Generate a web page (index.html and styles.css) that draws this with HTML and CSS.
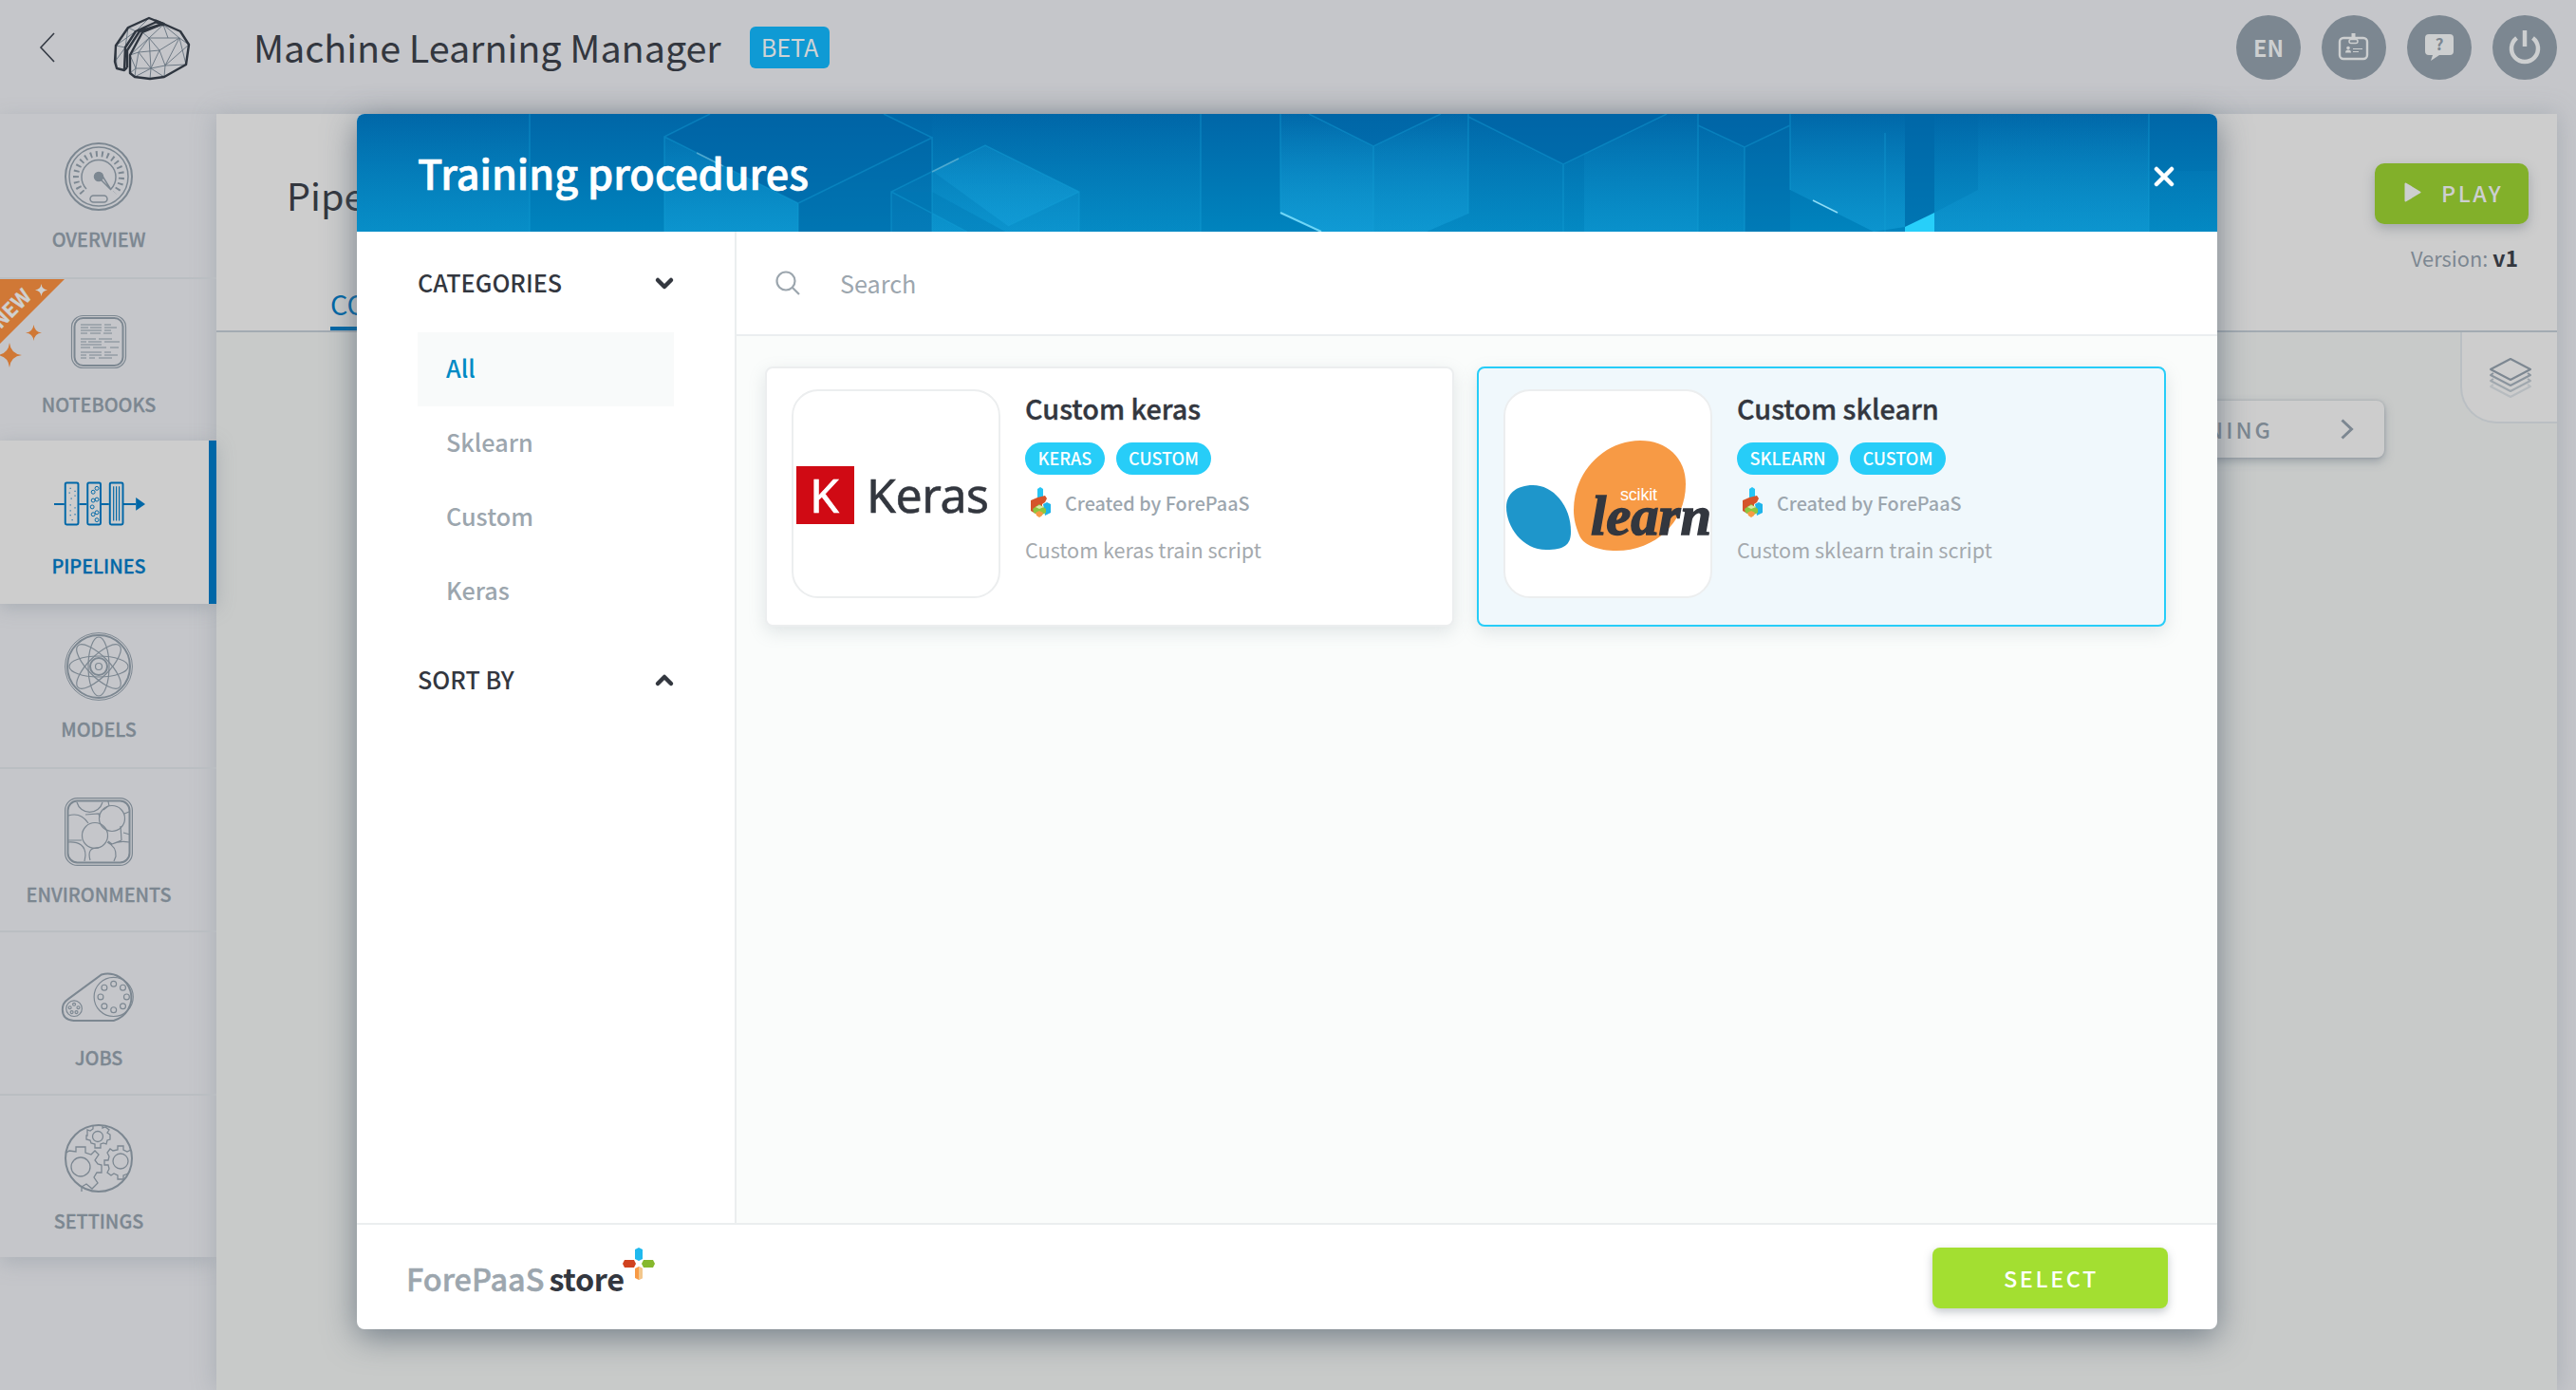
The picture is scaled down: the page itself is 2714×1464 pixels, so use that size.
FILE: index.html
```html
<!DOCTYPE html>
<html lang="en">
<head>
<meta charset="utf-8">
<title>Machine Learning Manager</title>
<link rel="stylesheet" href="styles.css">
</head>
<body>
<svg width="0" height="0" class="defs">
  <defs>
    <symbol id="brand" viewBox="0 0 22 32">
      <path d="M8 2l3-2 3 2v11l-3 2-3-2z" fill="#25c5f5"/>
      <path d="M1 14l7-3 8-2 2 3-2 4-3 2v5l-7 5-5-3z" fill="#d5542b"/>
      <path d="M14 18l4-2 4 2v9l-6 3z" fill="#1fb4ea"/>
      <path d="M3 23l7-5 7 5v4l-6 3-7-3z" fill="#8cc63f"/>
      <path d="M6 27l4-2 4 2-1 3-3 2-3-2z" fill="#f79a45"/>
      <path d="M6 21l4-2 5 2-5 2z" fill="#d9e8a8"/>
    </symbol>
    <symbol id="spark" viewBox="0 0 20 20"><path d="M10 0Q11 9 20 10Q11 11 10 20Q9 11 0 10Q9 9 10 0z" fill="currentColor"/></symbol>
  </defs>
</svg>

<header class="topbar">
  <svg class="back" viewBox="0 0 18 32" fill="none" stroke="#343a44" stroke-width="1.6"><path d="M16 1L2 16l14 15"/></svg>
  <svg class="logo" viewBox="0 0 82 68" fill="none" stroke="#2f3640" stroke-width="2.4" stroke-linejoin="round">
    <g stroke-width=".9" stroke="#64727e"><path d="M38 23h32M38 23l-7-6M38 23L53 9l17 14 10 7M38 23l11 13 21-13M38 23l-11 15-9 3M38 23L18 41M27 38l22-2M49 36l6 16 25-22M49 36l-9 19H24M27 38l13 17-1 11M27 38l-3 17-6 5M24 55l-6-14M40 55l14 9M40 55l15-3 22-1M55 52l-1 12M70 23L55 52M70 23l7 28M24 55l-1 9 17-9M38 23l2 32M38 2L24 16M16 12l8 4L3 31M13 33L3 31l1 24M13 33L2 48M16 12l-3 21M53 9l5 14"/></g>
    <path d="M53 8l18 8 9 14-3 21-23 13-15 2-16-2-5-4V41l13-24z"/><path d="M53 8L38 2 16 12 3 31 2 48l2 7 8 2 3-3"/><path d="M12 56l1-23 11-17L46 6M15 54V36l13-20 25-8"/><path d="M44 5l10 4" stroke-width="4"/>
  </svg>
  <h1 class="app-title">Machine Learning Manager</h1>
  <span class="beta">BETA</span>
  <nav class="actions">
    <span class="round">EN</span>
    <span class="round"><svg width="34" height="30" viewBox="0 0 34 30" fill="none" stroke="#cdcfd0"><rect x="2" y="5" width="29" height="22" rx="4" stroke-width="2.4"/><path d="M16.500 0v7" stroke-width="4"/><rect x="12" y="6.500" width="9" height="4" rx="2" fill="#7c8791" stroke-width="1.500"/><circle cx="11" cy="15.500" r="1.800" fill="#cdcfd0" stroke="none"/><path d="M8 20.500q0-3 3-3t3 3z" fill="#cdcfd0" stroke="none"/><path d="M16 16.500h10M16 19.500h6" stroke-width="1.200"/></svg></span>
    <span class="round"><svg width="30" height="28" viewBox="0 0 30 28"><path d="M4 0h22q4 0 4 4v14q0 4-4 4H15l-9 6 2-6H4q-4 0-4-4V4q0-4 4-4z" fill="#cdcfd0"/><text x="15" y="17" text-anchor="middle" font-size="17" font-weight="700" fill="#7c8791">?</text></svg></span>
    <span class="round"><svg width="34" height="36" viewBox="0 0 34 36" fill="none" stroke="#cdcfd0" stroke-width="4.500"><path d="M8.500 8a14 14 0 1 0 17 0"/><path d="M17 0v17"/></svg></span>
  </nav>
</header>

<div class="body">
  <aside class="sidebar">
    <div class="item">
      <svg viewBox="0 0 72 72" fill="none" stroke="#7c8791" stroke-width="1.500"><circle cx="36" cy="36" r="35" stroke-width="2"/><circle cx="36" cy="36" r="31"/><path d="M19 53a24 24 0 1 1 34 0" stroke-width="6" stroke-dasharray="1.900 4"/><path d="M23 49a18 18 0 1 1 26 0"/><circle cx="36" cy="36" r="4.500" fill="#7c8791"/><path d="M38 39l11 11-8-13z"/><rect x="27" y="56" width="18" height="7" rx="3.500"/></svg>
      <span>OVERVIEW</span>
    </div>
    <div class="item line">
      <svg viewBox="0 0 72 72" fill="none" stroke="#7c8791" stroke-width="1.200"><rect x="7.500" y="8.500" width="57" height="55" rx="12"/><rect x="10.500" y="11" width="51" height="50" rx="9" stroke-width="2"/><g stroke-width="1.100"><path d="M17 18h22M42 18h7M17 24h22M42 24h7M17 27h7M27 27h11M41 27h9M17 21h8M27 21h12M42 21h13M17 33h16M36 33h14M17 36h6M25 36h14M42 36h16M17 39h22M17 42h10M30 42h14M48 42h9M17 47h22M42 47h7M17 50h6M26 50h13M42 50h14M17 53h6M26 53h6M36 53h14"/></g></svg>
      <span>NOTEBOOKS</span>
      <div class="ribbon"><b>NEW</b></div>
      <svg class="sp s1"><use href="#spark"/></svg><svg class="sp s2"><use href="#spark"/></svg><svg class="sp s3"><use href="#spark"/></svg>
    </div>
    <div class="item active">
      <svg class="wide" viewBox="0 0 98 72" fill="none" stroke="#0067a7" stroke-width="2"><path d="M0 37h11M27 37h8M51 37h8M74 37h14"/><path d="M88 30l10 7-10 7z" fill="#0067a7" stroke="none"/><rect x="12" y="14" width="14" height="45" rx="1.500"/><rect x="36" y="14" width="14" height="45" rx="1.500"/><rect x="60" y="14" width="14" height="45" rx="1.500"/><path d="M64 18v37M67 18v37M70 18v37" stroke-width="1.200"/><g stroke-width="1"><circle cx="42" cy="24" r="2"/><circle cx="46" cy="20" r="2"/><circle cx="42" cy="33" r="2"/><circle cx="46" cy="32" r="2"/><circle cx="41" cy="40" r="2"/><circle cx="42" cy="48" r="2"/><circle cx="46" cy="46" r="2"/><circle cx="46" cy="54" r="2"/></g><path d="M17 20h1M22 23h1M16 25h1M18 31h1M22 28h1M17 38h1M22 41h1M17 44h1M17 49h1M22 48h1M19 54h1" stroke-width="1.300"/></svg>
      <span>PIPELINES</span>
    </div>
    <div class="item">
      <svg viewBox="0 0 72 72" fill="none" stroke="#7c8791" stroke-width="1.200"><circle cx="36" cy="36" r="35.400" stroke-width="1"/><circle cx="36" cy="36" r="33" stroke-width="2"/><ellipse cx="36" cy="36" rx="11" ry="31"/><ellipse cx="36" cy="36" rx="31" ry="11"/><ellipse cx="36" cy="36" rx="11" ry="31" transform="rotate(45 36 36)"/><ellipse cx="36" cy="36" rx="11" ry="31" transform="rotate(-45 36 36)"/><circle cx="36" cy="36" r="9" stroke-width="2"/><circle cx="36" cy="36" r="3.500"/></svg>
      <span>MODELS</span>
    </div>
    <div class="item line">
      <svg viewBox="0 0 72 72" fill="none" stroke="#7c8791" stroke-width="1.200"><rect x=".6" y=".6" width="70.800" height="70.800" rx="13"/><rect x="3.500" y="3.500" width="65" height="65" rx="10" stroke-width="2"/><circle cx="50" cy="22" r="13.500"/><circle cx="32" cy="40" r="13.500"/><path d="M13 5a14 14 0 0 0 27 0M4 19q13-4 21 8M4 45h14M4 47q18-1 18 14l-1 6M27 66q-4-14 9-13M45 47q10 5 9 15l-2 5M46 46l4 3q8-4 18-2M59 30l1 15M60 45l-10 4M62 37l7 2M46 4l1 5M63 17l5-2M41 13l5-4M22 18l14-1 1 4"/></svg>
      <span>ENVIRONMENTS</span>
    </div>
    <div class="item line">
      <svg class="wide" viewBox="-13 0 98 72" fill="none" stroke="#7c8791" stroke-width="1.200"><path d="M38 14a25 25 0 1 1 13 49.500H8q-12-1-12-12 0-7 6-11z" stroke-width="2"/><circle cx="51" cy="38" r="21"/><circle cx="8.500" cy="50.500" r="8.500"/><g><circle cx="51" cy="24" r="3"/><circle cx="61" cy="28" r="3"/><circle cx="65" cy="38" r="3"/><circle cx="61" cy="48" r="3"/><circle cx="51" cy="52" r="3"/><circle cx="41" cy="48" r="3"/><circle cx="37" cy="38" r="3"/><circle cx="41" cy="28" r="3"/><circle cx="8.500" cy="46" r="1.500"/><circle cx="13" cy="49.500" r="1.500"/><circle cx="11" cy="54.500" r="1.500"/><circle cx="6" cy="54.500" r="1.500"/><circle cx="4" cy="49.500" r="1.500"/></g></svg>
      <span>JOBS</span>
    </div>
    <div class="item line">
      <svg viewBox="0 0 72 72" fill="none" stroke="#7c8791" stroke-width="1.300"><circle cx="36" cy="36" r="35" stroke-width="2"/><circle cx="35" cy="13" r="5.500"/><path d="M30 2v3l-3 2-3-1v6h-1v4l4 1 1 3 4 1v4h6v-4l3-1 3 1 1-4 3-1v-5l-3-2 2-3-4-3-3 1V2"/><circle cx="17" cy="45" r="10"/><path d="M2 30l3-2 7 1v-5h10v6l6 2 4-4 4 4-4 6 3 4 4 1v8h-5l-3 5 4 6-6 6-6-5-5 3v5"/><circle cx="59" cy="39" r="8"/><path d="M70 27l-4 2-4-2v-4h-6v4l-5 1-3-2-3 4 2 4-1 4h-4v5h4l1 4-2 4 4 3 3-2 4 2v4h6v-4l5-2"/></svg>
      <span>SETTINGS</span>
    </div>
  </aside>
  <main class="pane">
    <section class="pane-head">
      <div class="pane-left">
        <h2>Pipe</h2>
        <div class="tabs"><span class="tab">CO</span></div>
      </div>
      <div class="pane-right">
        <button class="play"><svg width="18" height="21" viewBox="0 0 18 21"><path d="M1.500 1.500v18l15-9z" fill="#cdcfd0" stroke="#cdcfd0" stroke-width="2" stroke-linejoin="round"/></svg>PLAY</button>
        <p class="version">Version: <b>v1</b></p>
      </div>
    </section>
    <section class="canvas">
      <div class="node"><span>NING</span><svg width="14" height="22" viewBox="0 0 14 22" fill="none" stroke="#7c8791" stroke-width="3"><path d="M1.500 1.500L11.500 11l-10 9.500"/></svg></div>
      <div class="layers"><svg width="46" height="44" viewBox="0 0 46 44" fill="none" stroke-width="2" stroke-linejoin="round"><path d="M23 2L44 13 23 24 2 13z" stroke="#7c8791"/><path d="M5 17l-3 2 21 11 21-11-3-2" stroke="#8a949d"/><path d="M5 23l-3 2 21 11 21-11-3-2" stroke="#a0a8ae"/><path d="M5 29l-3 2 21 11 21-11-3-2" stroke="#b6bbbf"/></svg></div>
    </section>
  </main>
</div>

<div class="modal">
  <header class="modal-head">
    <svg class="pattern" viewBox="0 0 1960 124" preserveAspectRatio="none">
      <defs>
        <linearGradient id="g" x2="0" y2="1"><stop offset="0" stop-color="#0066a7"/><stop offset="1" stop-color="#0084be"/></linearGradient>
        <linearGradient id="l" gradientUnits="userSpaceOnUse" x1="0" y1="0" x2="0" y2="124"><stop offset="0" stop-color="#18a5de" stop-opacity=".02"/><stop offset="1" stop-color="#18a5de" stop-opacity=".5"/></linearGradient>
      </defs>
      <path d="M0 0h1960v124H0z" fill="url(#g)"/>
      <g fill="url(#l)">
        <path d="M0 0h182v124H0z" opacity=".6"/><path d="M324 24l141 70v30H324z"/><path d="M606 0h283v124H606z" opacity=".4"/>
        <path d="M563 82l99-49 99 49v42H563z" opacity=".7"/><path d="M606 60l56-27 99 49-75 36z" opacity=".9"/>
        <path d="M973 0h30l68 34v90h-55l-43-20z"/><path d="M1071 34l71-34h29v105l-44 19h-56z" opacity=".7"/>
        <path d="M973 0h198v105l-44 19h-111l-43-20z" opacity=".7"/>
        <path d="M1171 3l100 50v71H1127l44-19z" opacity=".4"/><path d="M1293 42l87-42h33v124H1293z" opacity=".8"/><path d="M1271 53l22-11v82h-22z" opacity=".3"/><path d="M1413 12l49 23v89h-49z" opacity=".4"/>
        <path d="M1510 0h121v119l-33 5-88-44z"/><path d="M1662 0h226v124H1662z" opacity=".6"/><path d="M1708 0h180v124h-226V104l46-24z" opacity=".6"/><path d="M1888 60h72v64h-72z" opacity=".3"/>
      </g>
      <path d="M372 0l-48 24 141 70 141-69-51-25z" fill="#0062a3" opacity=".5"/><path d="M465 94l141-69v99H465z" fill="#0063a4" opacity=".45"/>
      <path d="M606 82l-43 0 80 42h40z" fill="#0078b5" opacity=".4"/>
      <path d="M1003 0h139l-71 34zM1171 0h209l-109 53-100-50zM1413 0h97v12l-48 23-49-23z" fill="#0064a5" opacity=".5"/>
      <path d="M1462 35l48-23v112h-48z" fill="#0067a7" opacity=".3"/><path d="M1631 0h31v104l-31 15z" fill="#0067a7" opacity=".5"/>
      <path d="M1631 119l31-15v20h-31z" fill="#27cffa"/>
      <g fill="none" stroke="#14a0d6" stroke-width="1.500" opacity=".42"><path d="M182 0v124M372 0l-48 24v100M324 24l141 70v30M465 94l141-69v99M606 25L555 0M889 0v124M563 124V82l99-49 99 49v42M563 82l80 42M761 82l-75 36M973 0v104M1003 0l68 34 71-34M1071 34v90M1171 0v105M1171 3l100 50 109-53M1271 53v71M1413 0v124M1413 12l49 23 48-23M1462 35v89M1510 0v80M1610 20v104M1888 0v124"/></g>
      <path d="M973 104l43 20" stroke="#6fd6f7" stroke-width="2"/><path d="M1534 91l26 13" stroke="#8fdcf5" stroke-width="1.500"/><path d="M358 41l28 14M606 61l28-14" stroke="#4fa8cf" stroke-width="1.500"/>
    </svg>
    <h2>Training procedures</h2>
    <svg class="close" width="22" height="22" viewBox="0 0 22 22" stroke="#fff" stroke-width="4.500" stroke-linecap="round"><path d="M3 3l16 16M19 3L3 19"/></svg>
  </header>
  <div class="modal-body">
    <aside class="filters">
      <h3>CATEGORIES<svg width="20" height="13" viewBox="0 0 20 13"><path d="M3 3l7 7 7-7"/></svg></h3>
      <ul><li class="on">All</li><li>Sklearn</li><li>Custom</li><li>Keras</li></ul>
      <h3>SORT BY<svg width="20" height="13" viewBox="0 0 20 13"><path d="M3 10l7-7 7 7"/></svg></h3>
    </aside>
    <section class="results">
      <div class="search"><svg width="26" height="26" viewBox="0 0 26 26" fill="none" stroke="#9ca6ae" stroke-width="2.200"><circle cx="11" cy="11" r="9.500"/><path d="M18 18l7 7"/></svg><span>Search</span></div>
      <div class="cards">
        <article class="card">
          <div class="thumb"><svg viewBox="0 0 216 216"><path d="M3 79h61v61H3z" fill="#d00a14"/><text class="noto" x="17" y="128" font-size="50" fill="#fff">K</text><text class="noto" x="77" y="128" font-size="50" fill="#33373f" textLength="129">Keras</text></svg></div>
          <div class="info">
            <h4>Custom keras</h4>
            <div class="tags"><span>KERAS</span><span>CUSTOM</span></div>
            <p class="by"><svg width="22" height="32"><use href="#brand"/></svg>Created by ForePaaS</p>
            <p class="desc">Custom keras train script</p>
          </div>
        </article>
        <article class="card selected">
          <div class="thumb"><svg viewBox="0 0 216 216"><path d="M29 99C50 99 69 120 69 148C69 162 62 167 43 167C18 167 1 143 1 122C1 108 12 99 29 99z" fill="#1e96cb"/><path d="M142 52C170 52 190 70 190 98C190 138 158 168 117 168C98 168 82 162 78 152C74 142 72 135 72 125C72 85 104 52 142 52z" fill="#f79a45"/><text class="arial" x="121" y="115" font-size="18" fill="#fff" textLength="39">scikit</text><text class="script" x="90" y="151" font-size="60" fill="#33373f" textLength="127" lengthAdjust="spacingAndGlyphs">learn</text></svg></div>
          <div class="info">
            <h4>Custom sklearn</h4>
            <div class="tags"><span>SKLEARN</span><span>CUSTOM</span></div>
            <p class="by"><svg width="22" height="32"><use href="#brand"/></svg>Created by ForePaaS</p>
            <p class="desc">Custom sklearn train script</p>
          </div>
        </article>
      </div>
    </section>
  </div>
  <footer class="modal-foot">
    <div class="store"><span>ForePaaS</span><b>store</b>
      <svg width="34" height="34" viewBox="0 0 34 34"><path d="M13 2l4-2 4 2v10l-4 2-4-2z" fill="#1fb9ee"/><path d="M2 13h10l2 4-2 4H2l-2-4z" fill="#d0421f"/><path d="M22 13h10l2 4-2 4H22l-2-4z" fill="#86b82c"/><path d="M13 22l4-2 4 2v10l-4 2-4-2z" fill="#f79a45"/><path d="M17 20l4 2v10l-4 2z" fill="#f3c78c"/></svg>
    </div>
    <button class="select">SELECT</button>
  </footer>
</div>
</body>
</html>
```
FILE: styles.css
```css
* { box-sizing: border-box; margin: 0; padding: 0; }
body {
  width: 2714px; height: 1464px; overflow: hidden; position: relative;
  background: #c5c6ca; color: #33373f;
  font-family: "Noto Sans CJK SC", "Noto Sans", sans-serif;
}
.defs { position: absolute; }
svg { flex: none; overflow: visible; }
button { border: 0; font-family: inherit; }
h1, h2, h3, h4 { font-weight: 400; }

.topbar { height: 120px; display: flex; align-items: flex-start; padding: 16px 20px 0 41px; }
.back { width: 18px; height: 32px; margin-top: 18px; }
.logo { width: 82px; height: 68px; margin: 1px 0 0 60px; }
.app-title { font-size: 39.6px; line-height: 66px; letter-spacing: -.08px; margin-left: 66px; width: 523px; white-space: nowrap; }
.beta { width: 84px; height: 44px; margin-top: 12px; border-radius: 6px; background: #0f9ad4; color: #cfd3d5; font-size: 25.2px; line-height: 42px; text-align: center; }
.actions { display: flex; gap: 22px; margin-left: auto; }
.round { width: 68px; height: 68px; border-radius: 50%; background: #7c8791; color: #cdcfd0; display: flex; align-items: center; justify-content: center; font-size: 23.4px; font-weight: 700; line-height: 30px; padding-bottom: 1px; }

.body { display: flex; height: 1344px; }
.sidebar { width: 228px; height: 1204px; box-shadow: 0 6px 20px rgba(125, 138, 148, .35); }
.item { position: relative; height: 172px; padding: 30px 20px 0 0; display: flex; flex-direction: column; align-items: center; gap: 18px; color: #7c8791; font-size: 19.8px; font-weight: 500; line-height: 24px; -webkit-text-stroke: .3px currentColor; }
.item svg { width: 72px; height: 72px; }
.item svg.wide { width: 96px; margin-left: 2px; }
.item.line { padding-top: 32px; box-shadow: inset 0 2px #babec2; }
.item.active { background: #cdcdcd; color: #0067a7; box-shadow: inset -8px 0 #0067a7, 0 4px 18px rgba(125, 138, 148, .4); z-index: 1; }
.ribbon { position: absolute; left: 0; top: 2px; width: 68px; height: 68px; overflow: hidden; background: #d07836; clip-path: polygon(0 0, 100% 0, 0 100%); }
.ribbon b { position: absolute; left: -19px; top: 18px; width: 60px; color: #cfd0d0; font-size: 21px; text-align: center; transform: rotate(-45deg); }
.item .sp { position: absolute; color: #d07836; }
.item .s1 { left: 37px; top: 7px; width: 13px; height: 13px; color: #cfd0d0; }
.item .s2 { left: 27px; top: 50px; width: 17px; height: 17px; }
.item .s3 { left: -3px; top: 69px; width: 26px; height: 26px; }

.pane { width: 2466px; background: #c8cac9; box-shadow: 0 0 24px rgba(125, 138, 148, .4); }
.pane-head { height: 230px; background: #cdcdcd; border-bottom: 2px solid #a3abb2; display: flex; justify-content: space-between; }
.pane-left { padding: 55px 0 0 74px; display: flex; flex-direction: column; justify-content: space-between; }
.pane-left h2 { font-size: 39.6px; line-height: 60px; }
.tab { display: block; margin-left: 46px; font-size: 28.8px; line-height: 48px; color: #0067a7; border-bottom: 4px solid #0067a7; }
.pane-right { padding: 52px 30px 0 0; display: flex; flex-direction: column; align-items: flex-end; }
.play { width: 162px; height: 64px; border-radius: 10px; background: #82b02a; color: #cdcfd0; display: flex; align-items: center; gap: 21px; padding: 0 0 3px 31px; font-size: 23.4px; font-weight: 500; letter-spacing: 2.5px; box-shadow: 0 5px 12px rgba(90, 100, 112, .35); }
.version { margin-top: 18px; padding-right: 11px; font-size: 21.8px; line-height: 34px; color: #7c8791; }
.version b { color: #33373f; font-size: 23px; font-weight: 700; }
.canvas { display: flex; justify-content: flex-end; align-items: flex-start; gap: 80px; }
.node { width: 300px; height: 60px; margin-top: 72px; border-radius: 8px; background: #cdcdcd; display: flex; align-items: center; justify-content: flex-end; gap: 71px; padding-right: 32px; color: #7c8791; font-size: 23.4px; font-weight: 500; letter-spacing: 3px; box-shadow: 0 4px 10px rgba(110, 122, 134, .5), 0 0 3px rgba(110, 122, 134, .4); }
.layers { width: 102px; height: 96px; border: 2px solid #babfc3; border-width: 0 0 2px 2px; border-bottom-left-radius: 38px; background: #cdcdcd; padding: 26px 0 0 28px; }

.modal { position: absolute; left: 376px; top: 120px; width: 1960px; height: 1280px; border-radius: 8px; overflow: hidden; background: #fff; display: flex; flex-direction: column; box-shadow: 0 8px 34px rgba(70, 86, 102, .65); }
.modal-head { position: relative; height: 124px; padding: 0 45px 0 64px; display: flex; align-items: center; justify-content: space-between; color: #fff; }
.pattern { position: absolute; inset: 0; width: 1960px; height: 124px; overflow: hidden; }
.modal-head h2 { position: relative; font-size: 43.2px; line-height: 60px; font-weight: 500; padding-bottom: 2px; -webkit-text-stroke: .7px #fff; }
.close { position: relative; top: 4px; }
.modal-body { height: 1044px; display: flex; }
.filters { width: 400px; padding: 0 64px; border-right: 2px solid #ebeeef; }
.filters h3 { height: 106px; display: flex; align-items: center; justify-content: space-between; font-size: 25.2px; font-weight: 500; }
.filters h3 svg { fill: none; stroke: #33373f; stroke-width: 4.5; stroke-linecap: round; stroke-linejoin: round; position: relative; top: 1px; }
.filters ul { list-style: none; }
.filters li { height: 78px; line-height: 75px; padding-left: 30px; font-size: 25.2px; font-weight: 500; color: #9ca6ae; }
.filters li.on { background: #f8fafa; color: #008ac4; }
.results { width: 1560px; background: #fafcfb; }
.search { height: 110px; border-bottom: 2px solid #ebeef0; background: #fff; display: flex; align-items: center; gap: 42px; padding: 0 0 1px 41px; font-size: 25.2px; color: #9ca6ae; }
.cards { display: flex; gap: 24px; padding: 32px 30px; }
.card { width: 726px; height: 274px; border: 2px solid #eceeef; border-radius: 8px; background: #fff; padding: 22px 26px; display: flex; gap: 26px; box-shadow: 0 6px 18px rgba(125, 138, 148, .2); }
.card.selected { border-color: #27cdf8; background: #f0f8fc; }
.thumb { width: 220px; height: 220px; border: 2px solid #eceeef; border-radius: 28px; background: #fff; overflow: hidden; }
.thumb svg { display: block; overflow: hidden; }
.noto { font-family: "Noto Sans", sans-serif; stroke: #33373f; stroke-width: .6px; }
.noto:first-of-type { stroke: #fff; }
.arial { font-family: "Liberation Sans", sans-serif; }
.script { font-family: "Liberation Serif", serif; font-weight: 700; font-style: italic; stroke: #33373f; stroke-width: 1.5px; }
.info h4 { font-size: 28.8px; line-height: 38px; font-weight: 500; padding-top: 1px; margin-bottom: 17px; -webkit-text-stroke: .4px currentColor; }
.tags { display: flex; gap: 12px; margin-bottom: 14px; }
.tags span { height: 34px; line-height: 32px; padding: 0 13.5px; border-radius: 17px; background: #27cdf8; color: #fff; font-size: 18px; font-weight: 500; }
.by { display: flex; align-items: center; gap: 15px; padding-left: 5px; height: 30px; font-size: 19.8px; font-weight: 500; color: #9ca6ae; margin-bottom: 20px; }
.desc { font-size: 21.6px; line-height: 30px; color: #a4a9ad; }
.modal-foot { height: 112px; border-top: 2px solid #ebeeef; display: flex; align-items: center; justify-content: space-between; padding: 2px 52px 0 52px; }
.store { display: flex; font-size: 32.4px; line-height: 50px; color: #9ca6ae; font-weight: 500; -webkit-text-stroke: .5px currentColor; }
.store b { color: #33373f; margin-left: 5px; font-weight: 700; letter-spacing: -.4px; -webkit-text-stroke: 0; }
.store svg { margin: -7px 0 0 -2px; }
.select { width: 248px; height: 64px; border-radius: 8px; background: #a3df31; color: #fff; font-size: 23.4px; font-weight: 500; letter-spacing: 2.6px; padding-left: 2px; box-shadow: 0 4px 10px rgba(90, 100, 112, .35); }
```
